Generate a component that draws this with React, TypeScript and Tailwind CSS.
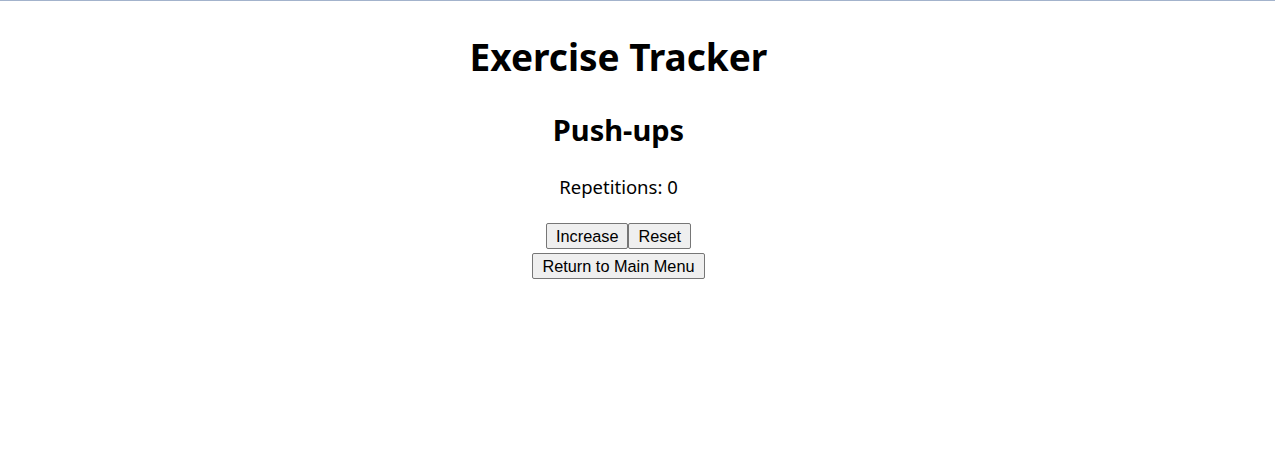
export default function App() {
  return (
    <div className="min-h-screen bg-white border-t border-[#a3b3cc]">
      <div className="flex flex-col items-center pr-[38px] font-['Noto_Sans',sans-serif] text-black">
        {/* 제목 */}
        <h1 className="mt-[31px] text-[37px] font-bold leading-[50px]">Exercise Tracker</h1>
        {/* 운동 */}
        <h2 className="mt-[28px] text-[29px] font-bold leading-[40px]">Push-ups</h2>
        <p className="mt-[24px] text-[18.5px] leading-[26px]">Repetitions: 0</p>
        <div className="mt-[23px] flex">
          <button className="h-[26px] px-[9px] bg-[#efefef] border border-[#767676] rounded-[2px] font-['Liberation_Sans',Arial,sans-serif] text-[16.3px] leading-none">
            Increase
          </button>
          <button className="h-[26px] px-[9px] bg-[#efefef] border border-[#767676] rounded-[2px] font-['Liberation_Sans',Arial,sans-serif] text-[16.3px] leading-none">
            Reset
          </button>
        </div>
        <button className="mt-[4px] h-[26px] px-[9px] bg-[#efefef] border border-[#767676] rounded-[2px] font-['Liberation_Sans',Arial,sans-serif] text-[16.3px] leading-none">
          Return to Main Menu
        </button>
      </div>
    </div>
  )
}
